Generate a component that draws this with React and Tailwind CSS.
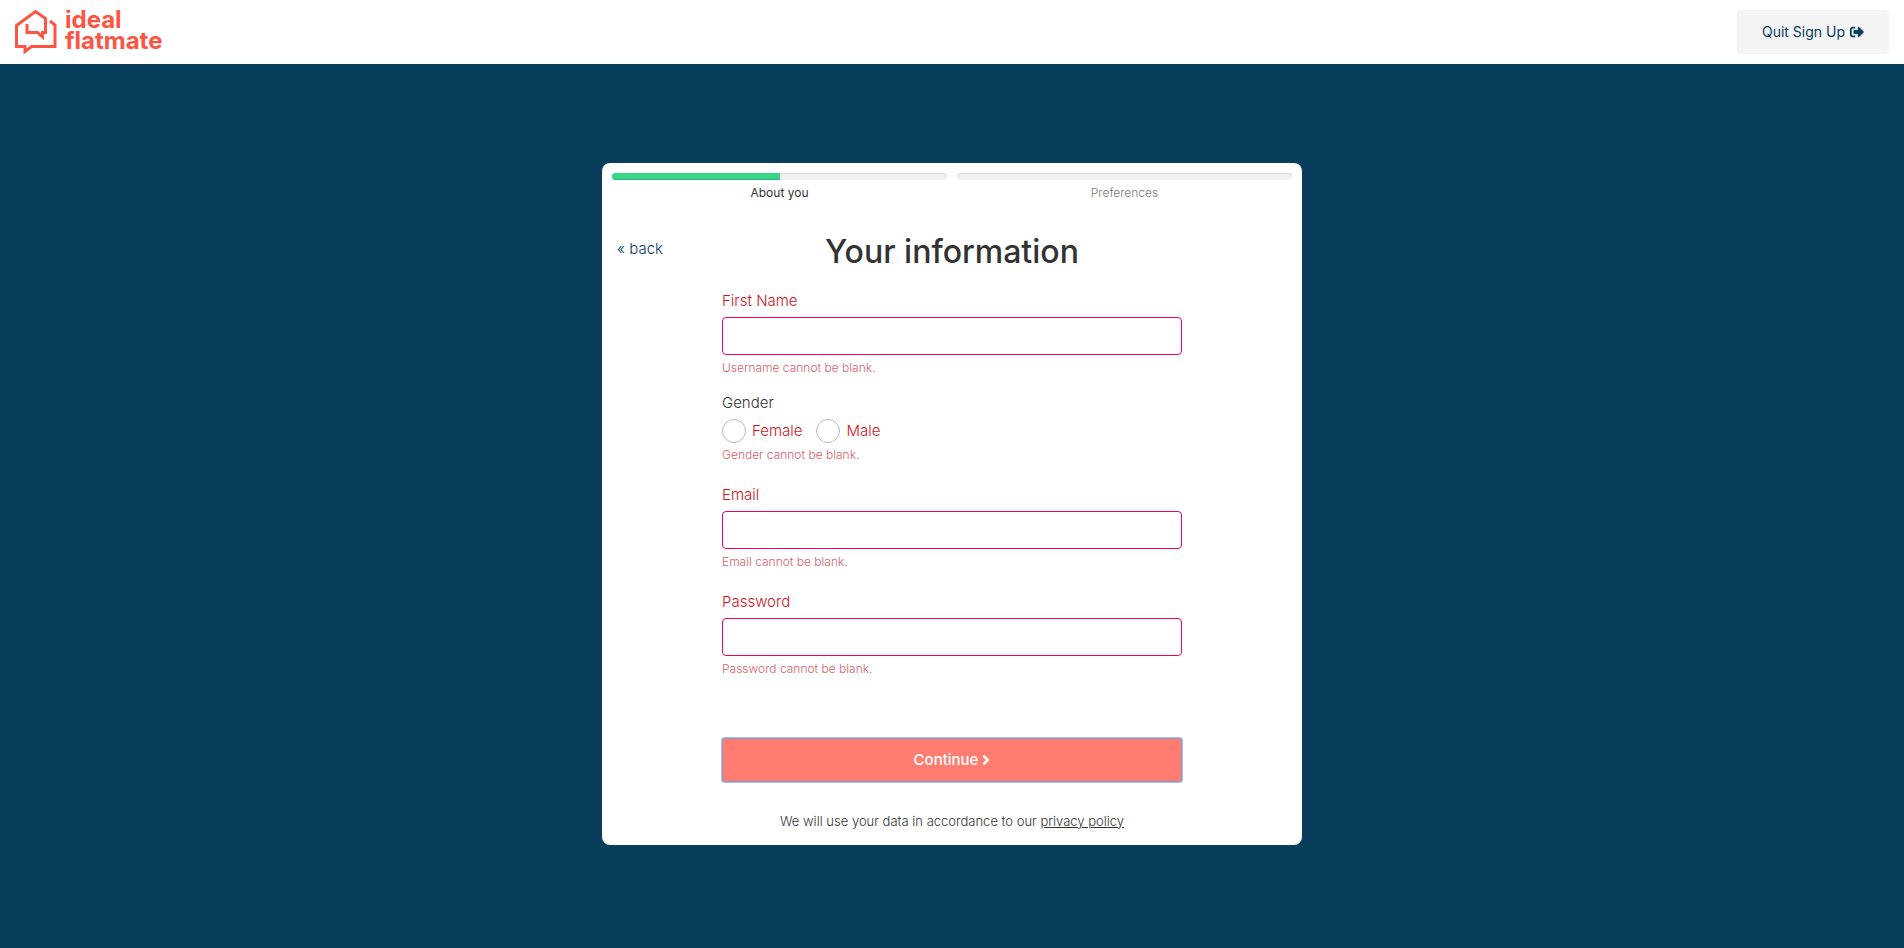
import { FaSignOutAlt, FaAngleRight } from "react-icons/fa";

function Logo() {
  return (
    <a href="#" className="flex items-center gap-2 text-[#fd5444]" aria-label="ideal flatmate">
      <svg viewBox="0 0 42 46" className="h-[46px] w-[42px]" fill="none" stroke="currentColor" strokeWidth="3">
        <path d="M35 12 L40 16 V37.500 H16.500 L10 42.500 V37.500 H1.500 V16.500 L20.500 2.500 L30.500 9.500 V23.500 H27.500 V28 L22.500 23.500 H12 V15" />
      </svg>
      <span className="flex flex-col pb-1 text-2xl leading-[21px] font-bold">
        <span>ideal</span>
        <span>flatmate</span>
      </span>
    </a>
  );
}

function Step({ label, value, active }) {
  return (
    <div className="flex-1">
      <div className="h-[7px] overflow-hidden rounded-sm bg-[#f3f3f3] shadow-[inset_0_1px_2px_rgba(0,0,0,0.12)]">
        <div
          className="h-full bg-[#38d58a] shadow-[inset_0_-1px_0_rgba(0,0,0,0.15)]"
          style={{ width: `${value}%` }}
        />
      </div>
      <p className={active ? "mt-[3px] text-center text-xs leading-5 text-[#333]" : "mt-[3px] text-center text-xs leading-5 font-light text-[#777]"}>
        {label}
      </p>
    </div>
  );
}

function Field({ id, label, type, error }) {
  return (
    <div>
      <label htmlFor={id} className="block text-[15px] leading-5 font-light text-[#d0141c]">
        {label}
      </label>
      <input
        id={id}
        type={type}
        aria-describedby={`${id}-error`}
        className="mt-1.5 block h-[38px] w-full rounded border border-[#f5005e] bg-white px-3 text-sm outline-none"
      />
      <p id={`${id}-error`} className="mt-[5px] text-xs leading-4 font-light text-[#d9606a]">
        {error}
      </p>
    </div>
  );
}

function Radio({ label }) {
  return (
    <label className="flex items-center gap-1.5 text-[15px] leading-6 font-light text-[#d0141c]">
      <input type="radio" name="gender" className="size-6 appearance-none rounded-full border border-[#bbb] bg-white checked:border-8 checked:border-[#38d58a]" />
      {label}
    </label>
  );
}

export default function App() {
  return (
    <div className="flex min-h-screen flex-col bg-[#083d5c] font-['Inter','Open_Sans',sans-serif] text-[#333]">
      <header className="flex h-16 items-center justify-between bg-white px-[15px]">
        <Logo />
        <button type="button" className="flex h-11 items-center gap-[5px] rounded bg-[#f4f4f4] px-[25px] text-sm text-[#083d5c]">
          Quit Sign Up
          <FaSignOutAlt className="size-3.5" />
        </button>
      </header>

      <main className="px-4 py-[99px]">
        <form className="mx-auto w-full max-w-[700px] rounded-lg bg-white px-2.5 pt-2.5 pb-3.5" onSubmit={(e) => e.preventDefault()}>
          <div className="flex gap-2.5">
            <Step label="About you" value={50} active />
            <Step label="Preferences" value={0} />
          </div>

          <div className="mt-[31px] grid grid-cols-[1fr_auto_1fr] items-start px-[5px]">
            <a href="#" className="pt-[3px] text-[15px] leading-6 font-light text-[#083d5c]">« back</a>
            <h1 className="text-[32px] leading-9 font-medium">Your information</h1>
          </div>

          <div className="mx-auto mt-[21px] w-full max-w-[460px]">
            <Field id="first-name" label="First Name" type="text" error="Username cannot be blank." />

            <fieldset className="mt-[17px]">
              <legend className="text-[15px] leading-5 font-light">Gender</legend>
              <div className="mt-1.5 flex gap-3.5">
                <Radio label="Female" />
                <Radio label="Male" />
              </div>
              <p className="mt-1 text-xs leading-4 font-light text-[#d9606a]">Gender cannot be blank.</p>
            </fieldset>

            <div className="mt-[22px] flex flex-col gap-[22px]">
              <Field id="email" label="Email" type="email" error="Email cannot be blank." />
              <Field id="password" label="Password" type="password" error="Password cannot be blank." />
            </div>

            <button
              type="submit"
              className="mt-[61px] flex h-11 w-full items-center justify-center gap-1 rounded-[3px] border border-[#a18fb8] bg-[#ff7d70] text-[15px] font-medium text-white ring-1 ring-[#9fc3f8]"
            >
              Continue
              <FaAngleRight className="h-4 w-2" />
            </button>
          </div>

          <p className="mt-[29px] text-center text-[13px] leading-5 font-light">
            We will use your data in accordance to our{" "}
            <a href="#" className="underline">privacy policy</a>
          </p>
        </form>
      </main>
    </div>
  );
}
